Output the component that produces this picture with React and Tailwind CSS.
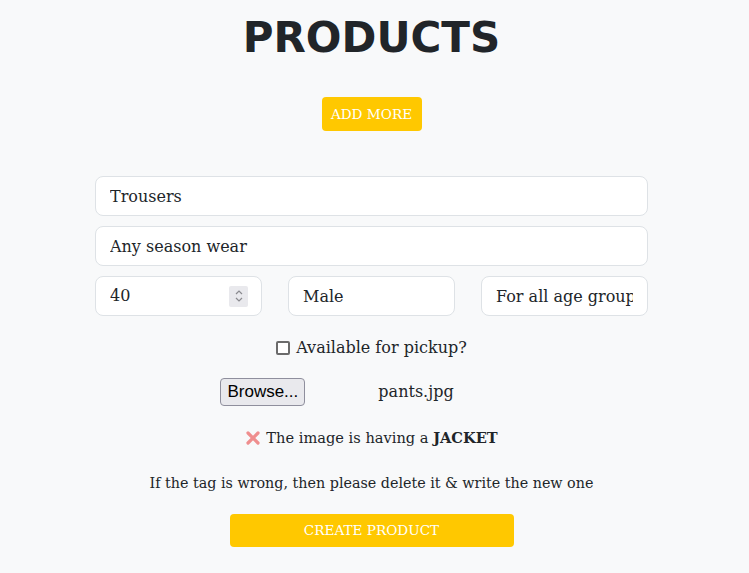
import React, { useState } from "react";

const serif = { fontFamily: '"DejaVu Serif", "Liberation Serif", serif' };

export default function App() {
  const [qty, setQty] = useState(40);
  const [pickup, setPickup] = useState(false);

  return (
    <div className="min-h-screen w-full bg-[#f8f9fa] text-[#212529]" style={serif}>
      <div className="flex flex-col items-center pt-[12px] pr-[6px]">
        <h1
          className="text-[42px] leading-[52px] font-bold text-[#212529]"
          style={{ fontFamily: '"DejaVu Sans", "Liberation Sans", sans-serif' }}
        >
          PRODUCTS
        </h1>

        <button
          type="button"
          className="mt-[33px] h-[34px] w-[100px] rounded-[4px] bg-[#ffc800] text-white text-[13.6px]"
        >
          ADD MORE
        </button>

        <form className="mt-[45px] w-[553px] flex flex-col" onSubmit={(e) => e.preventDefault()}>
          <input
            defaultValue="Trousers"
            className="h-[40px] w-full rounded-[8px] border border-[#dee2e6] bg-white px-[14px] text-[16px] outline-none"
          />
          <input
            defaultValue="Any season wear"
            className="mt-[10px] h-[40px] w-full rounded-[8px] border border-[#dee2e6] bg-white px-[14px] text-[16px] outline-none"
          />

          <div className="mt-[10px] grid grid-cols-3 gap-[26px]">
            <div className="h-[40px] rounded-[8px] border border-[#dee2e6] bg-white flex items-center pl-[14px] pr-[13px]">
              <input
                value={qty}
                onChange={(e) => setQty(e.target.value)}
                className="min-w-0 flex-1 bg-transparent text-[16px] outline-none"
              />
              <div className="flex h-[21px] w-[19px] items-center justify-center bg-[#e9e9ed] rounded-[2px]">
                <svg width="10" height="16" viewBox="0 0 10 16" fill="none" stroke="#8a8a8f" strokeWidth="1.2">
                  <path d="M2 6 L5 3 L8 6" />
                  <path d="M2 10 L5 13 L8 10" />
                </svg>
              </div>
            </div>
            <input
              defaultValue="Male"
              className="h-[40px] w-full min-w-0 rounded-[8px] border border-[#dee2e6] bg-white px-[14px] text-[16px] outline-none"
            />
            <input
              defaultValue="For all age groups"
              className="h-[40px] w-full min-w-0 rounded-[8px] border border-[#dee2e6] bg-white px-[14px] text-[16px] outline-none"
            />
          </div>

          <label className="mt-[20px] flex items-center justify-center gap-[6px] text-[16px] h-[24px]">
            <span
              onClick={() => setPickup(!pickup)}
              className="inline-block h-[14px] w-[14px] rounded-[2px] border-2 border-[#6b6b6b] bg-white"
            />
            Available for pickup?
          </label>

          <div className="mt-[18px] flex items-center justify-center">
            <button
              type="button"
              className="ml-[-69px] h-[28px] w-[85px] rounded-[4px] border border-[#8f8f9d] bg-[#e9e9ed] text-[17px] text-black"
              style={{ fontFamily: '"Liberation Sans", Arial, sans-serif' }}
            >
              Browse...
            </button>
            <span className="ml-[73px] text-[16px]">pants.jpg</span>
          </div>

          <div className="mt-[20px] flex items-center justify-center gap-[5px] text-[14.6px] h-[24px]">
            <svg width="16" height="16" viewBox="0 0 16 16">
              <path d="M3 3 L13 13 M13 3 L3 13" stroke="#ef8e8e" strokeWidth="3.2" strokeLinecap="round" />
            </svg>
            <span>
              The image is having a <b>JACKET</b>
            </span>
          </div>

          <p className="mt-[21px] text-center text-[14.3px] leading-[24px]">
            If the tag is wrong, then please delete it &amp; write the new one
          </p>

          <div className="mt-[19px] flex justify-center">
            <button
              type="submit"
              className="h-[33px] w-[284px] rounded-[4px] bg-[#ffc800] text-white text-[13.6px]"
            >
              CREATE PRODUCT
            </button>
          </div>
        </form>
      </div>
    </div>
  );
}
